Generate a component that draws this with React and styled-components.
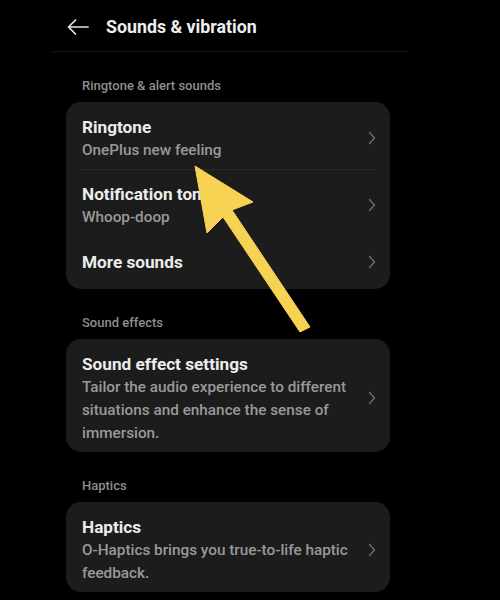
import React from 'react';
import styled, { createGlobalStyle } from 'styled-components';

const Global = createGlobalStyle`
  html, body {
    margin: 0;
    padding: 0;
    background: #000;
  }
  body {
    font-family: Roboto, "Noto Sans", sans-serif;
    -webkit-font-smoothing: antialiased;
  }
  #root {
    height: 600px;
    overflow: hidden;
    position: relative;
  }
`;

const Screen = styled.div`
  margin-left: 52px;
  width: 356px;
  display: flex;
  flex-direction: column;
`;

const Header = styled.header`
  display: flex;
  align-items: center;
  gap: 17px;
  padding: 2px 0 0 15px;
  border-bottom: 1px solid #141414;
  box-sizing: border-box;
  height: 52px;
`;

const BackButton = styled.button`
  border: 0;
  background: none;
  padding: 0;
  width: 22px;
  height: 18px;
  display: flex;
  align-items: center;
  color: #e6e6e6;
  cursor: pointer;
`;

const Title = styled.h1`
  margin: 0;
  font-size: 17.8px;
  font-weight: 700;
  color: #eeeeee;
`;

const SectionLabel = styled.div`
  padding-left: 30px;
  margin: 24px 0 6px;
  font-size: 13px;
  line-height: 20px;
  font-weight: 500;
  color: #8e8e8e;
`;

const Card = styled.div`
  margin: 0 18px 0 14px;
  background: #1c1c1c;
  border-radius: 15px;
  overflow: hidden;
`;

const Row = styled.div`
  display: flex;
  align-items: center;
  gap: 10px;
  padding: ${p => (p.$single ? '14px 14px 15px 16px' : '12.5px 14px 7.5px 16px')};
  position: relative;

  & + &::before {
    content: '';
    position: absolute;
    top: 0;
    left: 16px;
    right: 14px;
    height: 1px;
    background: #2a2a2a;
  }
`;

const RowText = styled.div`
  flex: 1;
  min-width: 0;
`;

const RowTitle = styled.div`
  font-size: 17.2px;
  line-height: 24px;
  font-weight: 700;
  color: #ececec;
`;

const RowSub = styled.div`
  font-size: 15.3px;
  line-height: 23px;
  font-weight: 500;
  color: #999999;
`;

const Chevron = () => (
  <svg width="8" height="14" viewBox="0 0 8 14" fill="none">
    <path d="M1.5 1.5 L6.5 7 L1.5 12.5" stroke="#6b6b6b" strokeWidth="1.4" strokeLinecap="round" strokeLinejoin="round" />
  </svg>
);

const BackArrow = () => (
  <svg width="22" height="16" viewBox="0 0 22 16" fill="none">
    <path d="M1.5 8 H21 M8.5 1 L1.5 8 L8.5 15" stroke="currentColor" strokeWidth="1.7" strokeLinecap="round" strokeLinejoin="round" />
  </svg>
);

const Pointer = styled.svg`
  position: absolute;
  left: 0;
  top: 0;
  pointer-events: none;
`;

const SettingRow = ({ title, sub }) => (
  <Row $single={!sub}>
    <RowText>
      <RowTitle>{title}</RowTitle>
      {sub && <RowSub>{sub}</RowSub>}
    </RowText>
    <Chevron />
  </Row>
);

const App = () => (
  <>
    <Global />
    <Screen>
      <Header>
        <BackButton aria-label="Back">
          <BackArrow />
        </BackButton>
        <Title>Sounds &amp; vibration</Title>
      </Header>

      <SectionLabel>Ringtone &amp; alert sounds</SectionLabel>
      <Card>
        <SettingRow title="Ringtone" sub="OnePlus new feeling" />
        <SettingRow title="Notification tone" sub="Whoop-doop" />
        <SettingRow title="More sounds" />
      </Card>

      <SectionLabel>Sound effects</SectionLabel>
      <Card>
        <SettingRow
          title="Sound effect settings"
          sub="Tailor the audio experience to different situations and enhance the sense of immersion."
        />
      </Card>

      <SectionLabel>Haptics</SectionLabel>
      <Card>
        <SettingRow title="Haptics" sub="O-Haptics brings you true-to-life haptic feedback." />
      </Card>
    </Screen>

    {/* callout arrow pointing at the ringtone row */}
    <Pointer width="500" height="600" viewBox="0 0 500 600">
      <polygon
        points="195,166 253,202 232,210 310,327 300,332 223,217 207,233"
        fill="#f6d352"
        stroke="#f6d352"
        strokeWidth="1"
        strokeLinejoin="round"
      />
    </Pointer>
  </>
);

export default App;
